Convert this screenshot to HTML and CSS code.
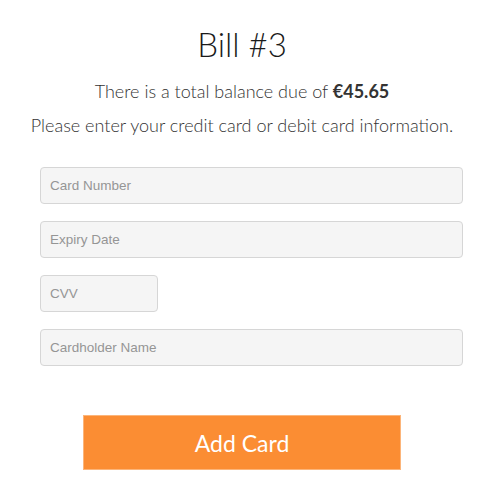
FILE: index.html
```html
<!DOCTYPE html>
<html lang="en">
<head>
<meta charset="utf-8">
<title>Bill #3</title>
<link rel="stylesheet" href="styles.css">
</head>
<body>
<main class="page">
  <h1 class="title">Bill #3</h1>
  <p class="balance">There is a total balance due of <strong>€45.65</strong></p>
  <p class="intro">Please enter your credit card or debit card information.</p>
  <form class="card-form">
    <input class="field" type="text" placeholder="Card Number">
    <input class="field" type="text" placeholder="Expiry Date">
    <input class="field field-short" type="text" placeholder="CVV">
    <input class="field" type="text" placeholder="Cardholder Name">
    <button class="submit" type="button">Add Card</button>
  </form>
</main>
</body>
</html>
```
FILE: styles.css
```css
html, body {
  margin: 0;
  padding: 0;
  background: #fff;
}
.page {
  width: 484px;
  font-family: "Lato", "Open Sans", sans-serif;
  color: #333;
  text-align: center;
}
.title {
  margin: 0;
  padding-top: 24px;
  font-size: 33px;
  font-weight: 300;
  line-height: 40px;
  color: #1a1a1a;
}
.balance {
  margin: 15px 0 0;
  font-size: 18px;
  line-height: 24px;
  color: #333;
  font-weight: 300;
}
.balance strong {
  font-weight: 700;
  color: #333;
}
.intro {
  margin: 10px 0 0;
  font-size: 18px;
  line-height: 24px;
  color: #333;
  font-weight: 300;
}
.card-form {
  display: flex;
  flex-direction: column;
  align-items: flex-start;
  margin-top: 30px;
  padding-left: 40px;
  gap: 17px;
}
.field {
  box-sizing: border-box;
  width: 423px;
  height: 37px;
  margin: 0;
  padding: 0 9px;
  border: 1px solid #d6d6d6;
  border-radius: 4px;
  background: #f5f5f5;
  font-family: "Liberation Sans", Arial, sans-serif;
  font-size: 13.5px;
  color: #333;
  outline: none;
}
.field::placeholder {
  color: #959595;
}
.field-short {
  width: 118px;
}
.submit {
  align-self: flex-start;
  margin: 32px 0 0 43px;
  width: 318px;
  height: 55px;
  border: 1px solid #fcb57a;
  background: #fb8d33;
  color: #fff;
  font-family: "Lato", "Open Sans", sans-serif;
  font-size: 23px;
  cursor: pointer;
}
```
